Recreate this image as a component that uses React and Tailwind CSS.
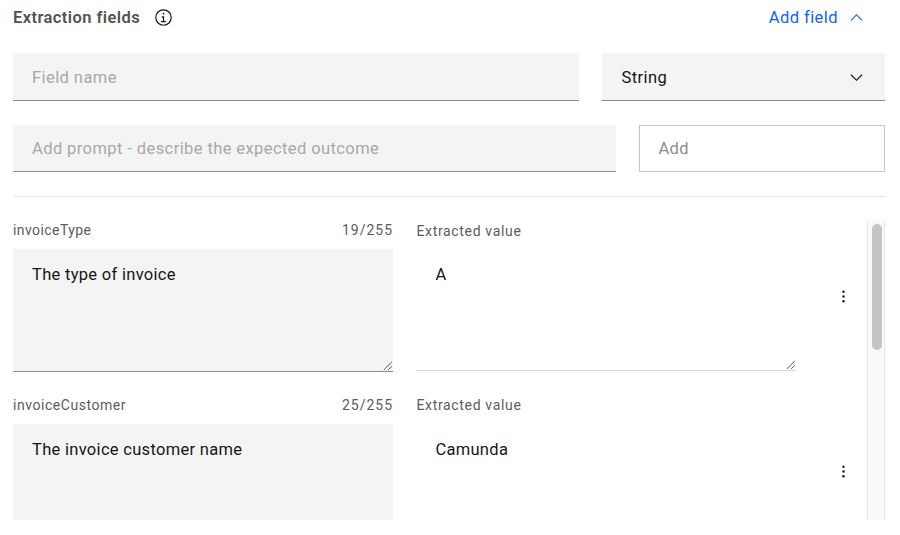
function InfoIcon() {
  return (
    <svg className="mb-px h-[19px] w-[19px] shrink-0" viewBox="0 0 32 32" fill="#161616">
      <path d="M17 22v-8h-4v2h2v6h-3v2h8v-2zM16 8a1.5 1.5 0 1 0 1.5 1.5A1.5 1.5 0 0 0 16 8z" />
      <path d="M16 30a14 14 0 1 1 14-14 14 14 0 0 1-14 14zm0-26a12 12 0 1 0 12 12A12 12 0 0 0 16 4z" />
    </svg>
  );
}

function Chevron({ up = false }) {
  return (
    <svg className="mb-px h-[19px] w-[19px] shrink-0" viewBox="0 0 16 16" fill="currentColor">
      {up ? <path d="M8 5l5 5-.7.7L8 6.4l-4.3 4.3L3 10z" /> : <path d="M8 11L3 6l.7-.7L8 9.6l4.3-4.3.7.7z" />}
    </svg>
  );
}

function ResizeGrip() {
  return (
    <svg className="h-[10px] w-[10px]" viewBox="0 0 10 10" fill="none" stroke="#555" strokeWidth="1">
      <path d="M.8 8.9L8.8 1M5.2 8.9L8.8 5.3" />
    </svg>
  );
}

function KebabIcon() {
  return (
    <svg className="h-[19px] w-[19px]" viewBox="0 0 32 32" fill="#161616">
      <circle cx="16" cy="8" r="2" />
      <circle cx="16" cy="16" r="2" />
      <circle cx="16" cy="24" r="2" />
    </svg>
  );
}

const rows = [
  { name: "invoiceType", nameTracking: "tracking-[0.43px]", count: "19/255", prompt: "The type of invoice", value: "A" },
  { name: "invoiceCustomer", nameTracking: "tracking-[0.54px]", count: "25/255", prompt: "The invoice customer name", value: "Camunda" },
];

function FieldRow({ row, first }) {
  return (
    <div className="flex h-[175px] shrink-0">
      <div className="w-[380px]">
        <div className="flex h-[29px] justify-between text-[14px] leading-[21px] text-[#5c5c5c]">
          <span className={row.nameTracking}>{row.name}</span>
          <span className="tracking-[0.98px]">{row.count}</span>
        </div>
        <div className="flex h-[123px] flex-col justify-between border-b border-[#8d8d8d] bg-[#f4f4f4] pl-[19px] pt-[14px]">
          <p className="leading-6 tracking-[0.3px]">{row.prompt}</p>
          <div className="flex justify-end">
            <ResizeGrip />
          </div>
        </div>
      </div>
      <div className="ml-[23.4px] w-[379.6px]">
        <p className={`h-[29px] text-[14px] tracking-[0.67px] text-[#5c5c5c] ${first ? "leading-[23px]" : "leading-[21px]"}`}>Extracted value</p>
        <div className="flex h-[122px] flex-col justify-between border-b border-[#d8d8d8] pl-[19px] pt-[14px]">
          <p className="leading-6 tracking-[0.3px]">{row.value}</p>
          <div className="flex justify-end">
            <ResizeGrip />
          </div>
        </div>
      </div>
      <div className="flex h-[153px] flex-1 items-center pl-[38px]">
        <KebabIcon />
      </div>
    </div>
  );
}

export default function App() {
  return (
    <main className="h-[535px] w-[900px] overflow-hidden bg-white pl-[13px] pr-[15px] font-['Roboto',sans-serif] text-[16.5px] text-[#161616]">
      <header className="flex h-[53px] items-start justify-between pt-[6px]">
        <div className="flex h-6 items-center gap-[14px]">
          <h1 className="font-semibold tracking-[0.42px] text-[#525252]">Extraction fields</h1>
          <InfoIcon />
        </div>
        <button className="flex h-6 items-center gap-[9px] pr-[19px] tracking-[0.44px] text-[#0f62fe]">
          Add field
          <Chevron up />
        </button>
      </header>

      <div className="flex h-12 gap-[23px]">
        <div className="flex w-[566px] items-center border-b border-[#8d8d8d] bg-[#f4f4f4] pl-[19px] pt-[3px] tracking-[0.43px] text-[#a8a8a8]">Field name</div>
        <div className="flex flex-1 items-center justify-between border-b border-[#8d8d8d] bg-[#f4f4f4] pl-[19.4px] pr-[19px] pt-[3px] tracking-[0.46px]">
          String
          <Chevron />
        </div>
      </div>

      <div className="mt-6 flex h-[47px] gap-[23px]">
        <div className="flex w-[603px] items-center border-b border-[#8d8d8d] bg-[#f4f4f4] pl-[19px] pt-[2px] tracking-[0.41px] text-[#a8a8a8]">Add prompt - describe the expected outcome</div>
        <div className="flex flex-1 items-center border border-[#c6c6c6] pl-[18.5px] pt-[2px] tracking-[0.3px] text-[#8d8d8d]">Add</div>
      </div>

      <div className="mt-6 h-px bg-[#e5e5e5]" />

      <section className="mt-[23px] flex h-[300px] overflow-hidden">
        <div className="flex min-w-0 flex-1 flex-col">
          {rows.map((row, i) => (
            <FieldRow key={row.name} row={row} first={i === 0} />
          ))}
        </div>
        <div className="w-[18px] border-x border-[#e8e8e8] bg-[#fafafa] pl-1 pt-1">
          <div className="h-[126px] w-[10px] rounded-full bg-[#c4c4c4]" />
        </div>
      </section>
    </main>
  );
}
